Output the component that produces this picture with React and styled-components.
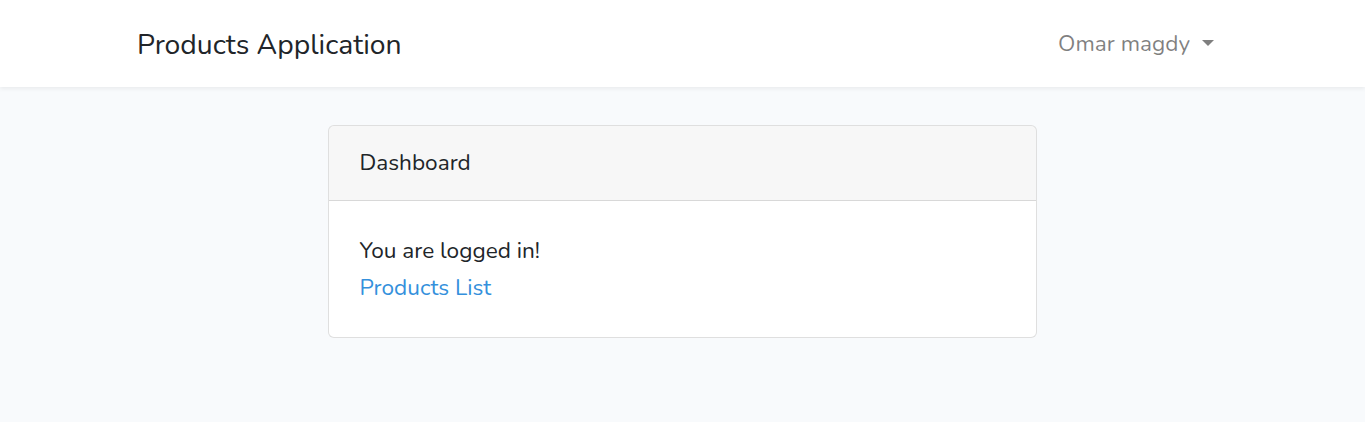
import React from 'react';
import styled, { createGlobalStyle } from 'styled-components';

const GlobalStyle = createGlobalStyle`
  body {
    margin: 0;
    background: #f8fafc;
    font-family: "Nunito", Lato, "Noto Sans", sans-serif;
    font-size: 22.6px;
    line-height: 1.6;
    color: #212529;
  }
`;

const Navbar = styled.nav`
  background: #fff;
  height: 87px;
  box-shadow: 0 2px 4px rgba(0, 0, 0, 0.06);
`;

const NavInner = styled.div`
  width: 1131px;
  margin: 0 auto;
  padding: 0 34px 0 20px;
  box-sizing: border-box;
  height: 100%;
  display: flex;
  align-items: center;
  justify-content: space-between;
`;

const Brand = styled.a`
  font-size: 28.3px;
  color: #212529;
  text-decoration: none;
  margin-top: 2px;
`;

const UserToggle = styled.a`
  display: flex;
  align-items: center;
  gap: 12px;
  color: rgba(0, 0, 0, 0.5);
  text-decoration: none;
  font-size: 22.6px;
  margin-top: 2px;
`;

const Caret = styled.span`
  width: 0;
  height: 0;
  border-left: 6px solid transparent;
  border-right: 6px solid transparent;
  border-top: 6px solid rgba(0, 0, 0, 0.5);
  margin-top: -2px;
`;

const Main = styled.main`
  display: flex;
  justify-content: center;
  padding-top: 38px;
  padding-right: 1px;
`;

const Card = styled.div`
  width: 709px;
  box-sizing: border-box;
  background: #fff;
  border: 1px solid rgba(0, 0, 0, 0.125);
  border-radius: 6px;
  overflow: hidden;
`;

const CardHeader = styled.div`
  height: 75px;
  box-sizing: border-box;
  padding: 0 31px;
  display: flex;
  align-items: center;
  background: rgba(0, 0, 0, 0.03);
  border-bottom: 1px solid rgba(0, 0, 0, 0.125);
`;

const CardBody = styled.div`
  padding: 31px 31px 31px;
  line-height: 37px;
`;

const Link = styled.a`
  color: #3490dc;
  text-decoration: none;
`;

export default function App() {
  return (
    <>
      <GlobalStyle />
      <Navbar>
        <NavInner>
          <Brand href="#">Products Application</Brand>
          <UserToggle href="#">
            Omar magdy <Caret />
          </UserToggle>
        </NavInner>
      </Navbar>
      <Main>
        <Card>
          <CardHeader>Dashboard</CardHeader>
          <CardBody>
            You are logged in!
            <br />
            <Link href="#">Products List</Link>
          </CardBody>
        </Card>
      </Main>
    </>
  );
}
